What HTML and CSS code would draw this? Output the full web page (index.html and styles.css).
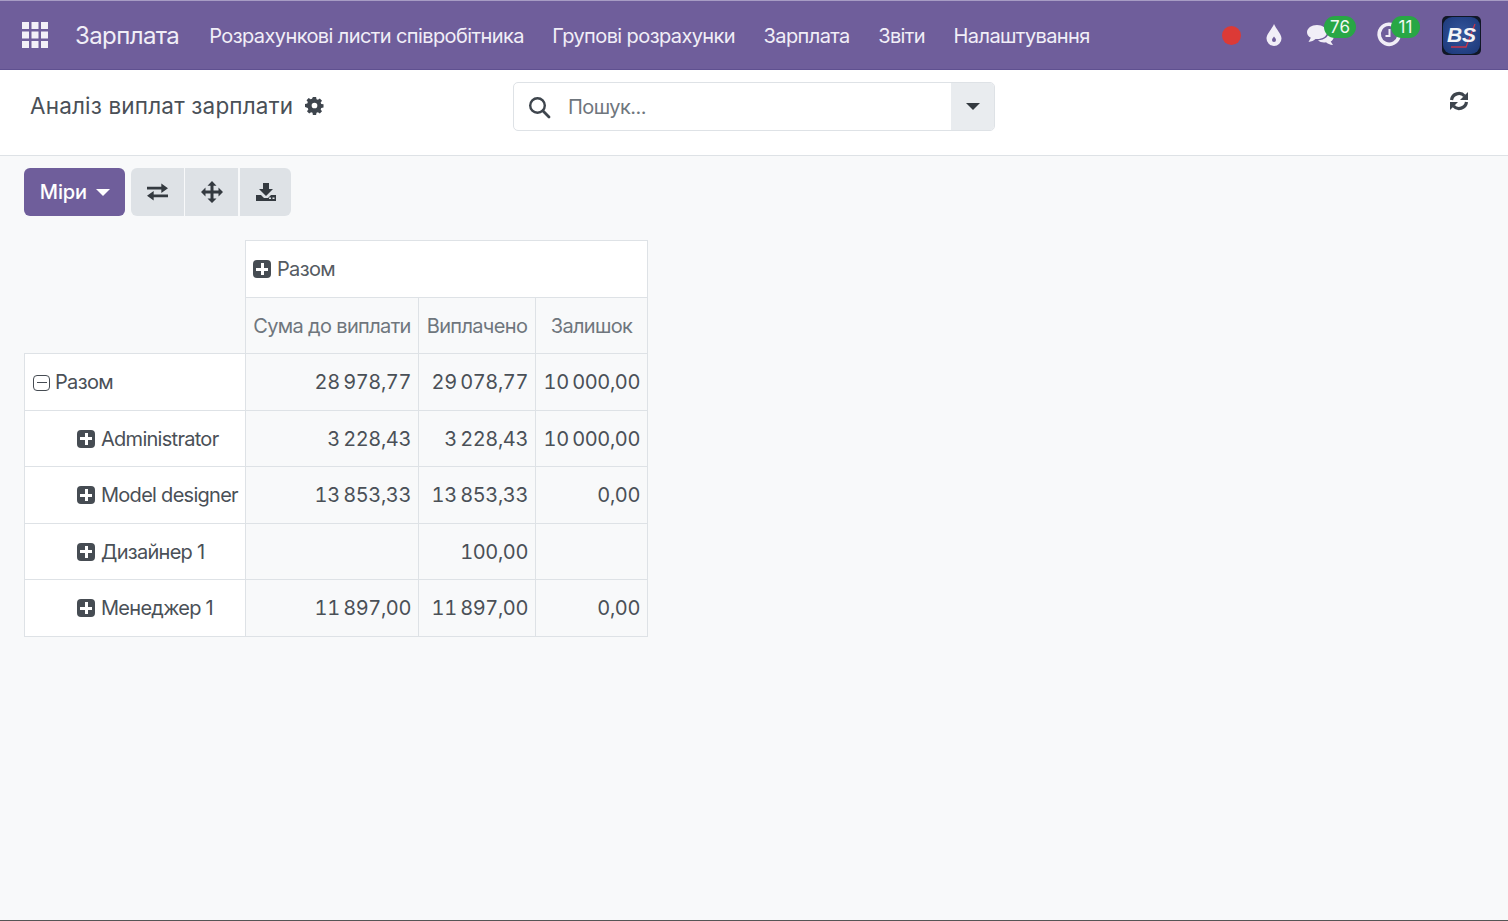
FILE: index.html
```html
<!DOCTYPE html>
<html lang="uk">
<head>
<meta charset="utf-8">
<title>Аналіз виплат зарплати</title>
<link rel="stylesheet" href="styles.css">
</head>
<body>
<header class="navbar">
  <svg class="apps" viewBox="0 0 26 26" width="26" height="26"><g fill="#f3f0f8"><rect width="7" height="7"/><rect x="9.5" width="7" height="7"/><rect x="19" width="7" height="7"/><rect y="9.5" width="7" height="7"/><rect x="9.5" y="9.5" width="7" height="7"/><rect x="19" y="9.5" width="7" height="7"/><rect y="19" width="7" height="7"/><rect x="9.5" y="19" width="7" height="7"/><rect x="19" y="19" width="7" height="7"/></g></svg>
  <span class="brand">Зарплата</span>
  <nav class="menu">
    <a>Розрахункові листи співробітника</a>
    <a>Групові розрахунки</a>
    <a>Зарплата</a>
    <a>Звіти</a>
    <a>Налаштування</a>
  </nav>
  <div class="systray">
    <span class="dot"></span>
    <svg class="drop" viewBox="0 0 18 24" width="18" height="24"><path fill="#f1eef7" fill-rule="evenodd" d="M9 1C7 6 1.500 11 1.500 15.500A7.500 7.500 0 0 0 16.500 15.500C16.500 11 11 6 9 1ZM9 13.500c-1 1.500-2 2.300-2 3.500a2 2 0 0 0 4 0c0-1.200-1-2-2-3.500Z"/></svg>
    <span class="tray-item tray-chat">
      <svg viewBox="0 0 30 26" width="30" height="26"><g fill="#f1eef7"><path d="M11 3C5.500 3 1 6.200 1 10.200c0 2.300 1.500 4.300 3.800 5.600L2.500 20c3-.3 5.500-1.500 7-3 .5 0 1 .1 1.500.1 5.500 0 10-3 10-6.900S16.500 3 11 3Z"/><path d="M23 9c.3 5-4 9-11 9.300 1.500 1.500 3.800 2.200 6 2.200.8 0 1.400 0 2-.2 1.500 1.300 4 2.700 7 2.700l-2.300-3.500c1.800-1 3-2.700 3-4.500 0-2.700-1.800-5-4.700-6Z"/></g></svg>
      <span class="badge">76</span>
    </span>
    <span class="tray-item tray-clock">
      <svg viewBox="0 0 26 26" width="26" height="26"><path fill="none" stroke="#f1eef7" stroke-width="3.600" d="M20.500 5.500A10 10 0 1 0 23 14"/><path fill="none" stroke="#f1eef7" stroke-width="2" d="M13.500 7v7h-4"/></svg>
      <span class="badge badge-narrow">11</span>
    </span>
    <svg class="avatar" viewBox="0 0 39 39" width="39" height="39">
      <defs>
        <radialGradient id="avatar-bg" cx="50%" cy="45%" r="65%">
          <stop offset="0" stop-color="#34569c"/>
          <stop offset="1" stop-color="#1e3a7c"/>
        </radialGradient>
      </defs>
      <rect width="39" height="39" rx="5" fill="#111726"/>
      <rect x="1" y="1" width="37" height="37" rx="9" fill="url(#avatar-bg)"/>
      <path d="M9 31H24L33 8" stroke="#c8354a" stroke-width="1.300" fill="none"/>
      <text x="19.500" y="26" class="avatar-text">BS</text>
    </svg>
  </div>
</header>

<section class="control-panel">
  <div class="title-wrap">
    <h1 class="title">Аналіз виплат зарплати</h1>
    <svg class="gear" viewBox="0 0 20 20" width="19" height="19"><path fill="#3e454d" fill-rule="evenodd" d="M8.300 1h3.400l.4 2.400 1.500.6 2-1.400 2.300 2.300-1.400 2 .6 1.500 2.400.4v3.400l-2.400.4-.6 1.500 1.400 2-2.300 2.300-2-1.400-1.500.6-.4 2.400H8.300l-.4-2.400-1.500-.6-2 1.400-2.300-2.300 1.400-2-.6-1.500L0 11.700V8.300l2.400-.4.6-1.500-1.400-2 2.300-2.300 2 1.400 1.500-.6ZM10 7a3 3 0 1 0 0 6 3 3 0 0 0 0-6Z"/></svg>
  </div>
  <div class="search">
    <svg class="search-icon" viewBox="0 0 24 24" width="24" height="24"><circle cx="10.500" cy="10.500" r="7.300" fill="none" stroke="#3e454d" stroke-width="2.400"/><path d="M15.800 15.800L22 22" stroke="#3e454d" stroke-width="2.800" stroke-linecap="round"/></svg>
    <span class="search-placeholder">Пошук...</span>
    <span class="search-toggle"><span class="caret caret-dark"></span></span>
  </div>
  <svg class="refresh" viewBox="0 0 20 20" width="20" height="20"><g fill="none" stroke="#3e454d" stroke-width="3.200"><path d="M2.500 9A7.500 7.500 0 0 1 15.500 5"/><path d="M17.500 11A7.500 7.500 0 0 1 4.500 15"/></g><path fill="#3e454d" d="M19 1v8h-8ZM1 19v-8h8Z"/></svg>
</section>

<main class="content">
  <div class="toolbar">
    <button class="btn-primary">Міри <span class="caret caret-light"></span></button>
    <div class="btn-group">
      <button class="btn-light">
        <svg viewBox="0 0 22 18" width="21" height="18"><g fill="#343a40"><path d="M0 4h15V0.500L22 5.500 15 10.500V7H0Z" transform="translate(0 -.5)"/><path d="M22 11H7V7.500L0 12.500 7 17.500V14H22Z" transform="translate(0 .5)"/></g></svg>
      </button>
      <button class="btn-light">
        <svg viewBox="0 0 22 22" width="22" height="22"><path fill="#343a40" d="M11 0l4.500 4.800h-3V9.500h5V6.500L22 11l-4.500 4.500v-3h-5v5h3L11 22l-4.500-4.500h3v-5h-5v3L0 11l4.500-4.500v3h5V4.800h-3Z"/></svg>
      </button>
      <button class="btn-light btn-last">
        <svg viewBox="0 0 20 18" width="20" height="18"><path fill="#343a40" fill-rule="evenodd" d="M7 0h6v6h4l-7 7-7-7h4ZM0 12h5l3 3h4l3-3h5v6H0ZM13 14.500h2v1.500h-2ZM16.500 14.500h2v1.500h-2Z"/></svg>
      </button>
    </div>
  </div>

  <table class="pivot">
    <colgroup><col class="col-a"><col class="col-b"><col class="col-c"><col class="col-d"></colgroup>
    <thead>
      <tr>
        <th class="blank" rowspan="2"></th>
        <th class="head-group" colspan="3"><span class="plus"></span>Разом</th>
      </tr>
      <tr>
        <th class="head-measure">Сума до виплати</th>
        <th class="head-measure">Виплачено</th>
        <th class="head-measure">Залишок</th>
      </tr>
    </thead>
    <tbody>
      <tr><th class="row-head"><span class="minus"></span>Разом</th><td>28 978,77</td><td>29 078,77</td><td>10 000,00</td></tr>
      <tr><th class="row-head sub"><span class="plus"></span>Administrator</th><td>3 228,43</td><td>3 228,43</td><td>10 000,00</td></tr>
      <tr><th class="row-head sub"><span class="plus"></span>Model designer</th><td>13 853,33</td><td>13 853,33</td><td>0,00</td></tr>
      <tr><th class="row-head sub"><span class="plus"></span>Дизайнер 1</th><td></td><td>100,00</td><td></td></tr>
      <tr><th class="row-head sub"><span class="plus"></span>Менеджер 1</th><td>11 897,00</td><td>11 897,00</td><td>0,00</td></tr>
    </tbody>
  </table>
</main>
</body>
</html>
```
FILE: styles.css
```css
* { box-sizing: border-box; }
html, body { margin: 0; height: 100%; }
body {
  height: 921px;
  overflow: hidden;
  display: flex;
  flex-direction: column;
  background: #f8f9fa;
  color: #4a5057;
  font-family: Inter, "Liberation Sans", sans-serif;
  font-size: 20px;
  border-bottom: 1px solid #555;
}
.navbar {
  flex: none;
  height: 70px;
  display: flex;
  align-items: center;
  background: #6f5e9b;
  border-top: 1px solid #a79cc4;
  border-bottom: 1px solid #5f5090;
  color: #f1eef7;
  padding: 0 27px 0 22px;
}
.apps { flex: none; }
.brand { font-size: 24px; margin-left: 27px; letter-spacing: -0.6px; }
.menu { display: flex; gap: 28.500px; margin-left: 30px; padding-top: 2px; font-size: 20px; letter-spacing: -0.6px; }
.systray { margin-left: auto; display: flex; align-items: center; }
.dot { width: 19px; height: 19px; border-radius: 50%; background: #dc3a36; }
.drop { margin-left: 24px; }
.tray-item { position: relative; display: inline-flex; }
.tray-chat { margin-left: 23px; width: 58px; }
.tray-clock { margin-left: 12px; width: 53px; }
.badge {
  position: absolute;
  top: -6px;
  left: 18px;
  min-width: 32px;
  height: 22px;
  padding: 0 5px;
  border-radius: 11px;
  background: #28a745;
  color: #f1f8f3;
  font-size: 17px;
  line-height: 22px;
  text-align: center;
}
.badge-narrow { left: 15px; min-width: 29px; }
.avatar { margin-left: 13px; }
.avatar-text { font: italic 700 21px "Liberation Sans", sans-serif; fill: #f4f4f6; text-anchor: middle; }

.control-panel {
  flex: none;
  height: 86px;
  position: relative;
  display: flex;
  align-items: flex-start;
  background: #fff;
  border-bottom: 1px solid #dee2e6;
}
.title-wrap { width: 513px; display: flex; align-items: center; gap: 12px; padding: 22px 0 0 30px; }
.title { margin: 0; font-size: 22.500px; font-weight: 400; line-height: 27px; color: #4a5057; letter-spacing: 0.17px; white-space: nowrap; }
.gear { flex: none; }
.search {
  width: 482px;
  height: 49px;
  margin-top: 12px;
  display: flex;
  align-items: center;
  border: 1px solid #dee2e6;
  border-radius: 5px;
  overflow: hidden;
  background: #fff;
}
.search-icon { margin-left: 13px; flex: none; }
.search-placeholder { margin-left: 17px; flex: 1; color: #6f767d; font-size: 20px; letter-spacing: -0.55px; }
.search-toggle { width: 43px; height: 100%; display: flex; align-items: center; justify-content: center; background: #e9ecef; }
.refresh { margin: 21px 0 0 454px; flex: none; }

.caret { display: inline-block; width: 0; height: 0; border-left: 7px solid transparent; border-right: 7px solid transparent; }
.caret-dark { border-top: 7px solid #343a40; }
.caret-light { border-top: 7px solid #fff; margin-left: 4px; vertical-align: 3px; }

.content { flex: 1; padding: 12px 24px; }
.toolbar { display: flex; gap: 6px; height: 48px; }
.btn-primary {
  width: 101px;
  border: 0;
  border-radius: 6px;
  background: #6f5e9b;
  color: #fff;
  font: 500 20px Inter, "Liberation Sans", sans-serif;
  letter-spacing: -0.1px;
  padding: 0 0 0 1px;
}
.btn-group { display: flex; gap: 1px; border-radius: 6px; overflow: hidden; }
.btn-light {
  width: 53px;
  border: 0;
  padding: 0;
  background: #dee2e6;
  display: flex;
  align-items: center;
  justify-content: center;
}
.btn-last { width: 51px; margin-left: 1px; }

.pivot {
  margin-top: 24px;
  width: 623px;
  table-layout: fixed;
  border-collapse: collapse;
  font-size: 20px;
  letter-spacing: -0.65px;
}
.col-a { width: 221px; }
.col-b { width: 173px; }
.col-c { width: 117px; }
.col-d { width: 112px; }
.pivot tr { height: 56.500px; }
.pivot th, .pivot td { border: 1px solid #dee2e6; padding: 1px 7px 0; white-space: nowrap; font-weight: 400; }
.pivot td {
  text-align: right;
  color: #4a5057;
  background: #f8f9fa;
  font-variant-numeric: tabular-nums;
  letter-spacing: -0.4px;
  word-spacing: -1.500px;
}
.pivot .blank { border: 0; border-right: 1px solid #dee2e6; border-bottom: 1px solid #dee2e6; background: transparent; }
.head-group { text-align: left; background: #fff; color: #555b62; }
.head-measure { text-align: center; background: #f8f9fa; color: #6f767d; }
.row-head { text-align: left; background: #fff; color: #4a5057; }
.pivot .row-head.sub { padding-left: 52px; letter-spacing: -0.72px; }
.plus, .minus {
  display: inline-block;
  position: relative;
  width: 18px;
  height: 18px;
  margin-right: 6px;
  vertical-align: -2px;
  border-radius: 4px;
}
.plus { background: #464c53; }
.plus::before, .plus::after { content: ""; position: absolute; background: #fff; }
.plus::before { left: 3px; right: 3px; top: 7.500px; height: 3px; }
.plus::after { top: 3px; bottom: 3px; left: 7.500px; width: 3px; }
.minus { width: 17px; height: 16px; border: 1.500px solid #464c53; margin-left: 1px; margin-right: 5px; }
.minus::before { content: ""; position: absolute; left: 2.500px; right: 2.500px; top: 5.500px; height: 1.500px; background: #464c53; }
```
